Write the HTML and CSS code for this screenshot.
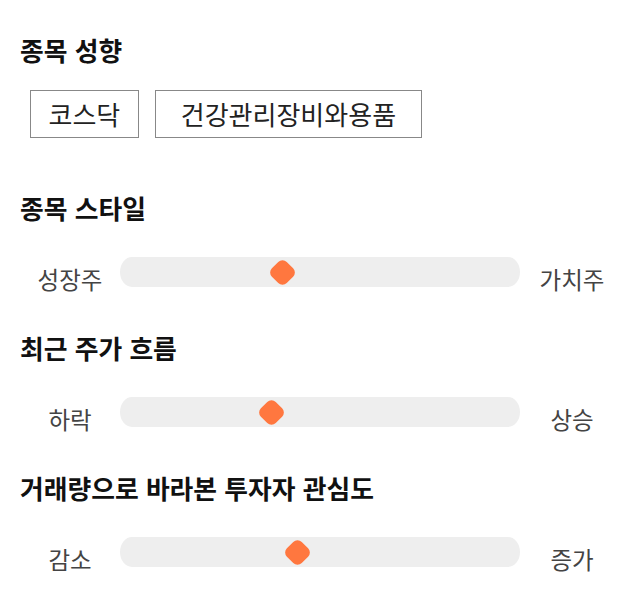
FILE: index.html
```html
<!DOCTYPE html>
<html lang="ko">
<head>
<meta charset="utf-8">
<link rel="stylesheet" href="styles.css">
</head>
<body>
<main class="page">
  <section class="section section-tags">
    <h2 class="title">종목 성향</h2>
    <div class="tags">
      <span class="tag">코스닥</span>
      <span class="tag tag-wide">건강관리장비와용품</span>
    </div>
  </section>
  <section class="section">
    <h2 class="title">종목 스타일</h2>
    <div class="slider">
      <span class="label">성장주</span>
      <div class="track"><span class="thumb" style="left: 40.5%"></span></div>
      <span class="label">가치주</span>
    </div>
  </section>
  <section class="section">
    <h2 class="title">최근 주가 흐름</h2>
    <div class="slider">
      <span class="label">하락</span>
      <div class="track"><span class="thumb" style="left: 37.75%"></span></div>
      <span class="label">상승</span>
    </div>
  </section>
  <section class="section">
    <h2 class="title">거래량으로 바라본 투자자 관심도</h2>
    <div class="slider">
      <span class="label">감소</span>
      <div class="track"><span class="thumb" style="left: 44.25%"></span></div>
      <span class="label">증가</span>
    </div>
  </section>
</main>
</body>
</html>
```

FILE: styles.css
```css
* { box-sizing: border-box; }
html, body { margin: 0; padding: 0; background: #fff; }
body {
  font-family: "Noto Sans CJK KR", "Noto Sans", sans-serif;
  color: #111;
}
.page {
  padding: 34px 16px 0 20px;
  width: 640px;
}
.section { margin-bottom: 45px; }
.section-tags { margin-bottom: 54px; }
.title {
  margin: 0;
  font-size: 25.8px;
  line-height: 32px;
  font-weight: 700;
  color: #111;
}
.tags {
  display: flex;
  gap: 16px;
  margin-top: 24px;
  padding-left: 10px;
}
.tag {
  display: flex;
  align-items: center;
  justify-content: center;
  height: 48px;
  padding: 0 17.5px 2px;
  border: 1px solid #888;
  font-size: 26px;
  color: #222;
}
.tag-wide { padding: 0 25px 2px; }
.slider {
  display: grid;
  grid-template-columns: 100px 400px 104px;
  grid-template-rows: 30px;
  margin-top: 33px;
}
.label {
  align-self: start;
  text-align: center;
  font-size: 23.5px;
  line-height: 30px;
  color: #444;
  padding-top: 7px;
}
.track {
  position: relative;
  height: 30px;
  background: #eeeeee;
  border-radius: 12px / 15px;
}
.thumb {
  position: absolute;
  top: 50%;
  width: 21px;
  height: 21px;
  margin-left: -10.5px;
  margin-top: -10.5px;
  background: #ff773f;
  border-radius: 6px;
  transform: rotate(45deg);
}
```
